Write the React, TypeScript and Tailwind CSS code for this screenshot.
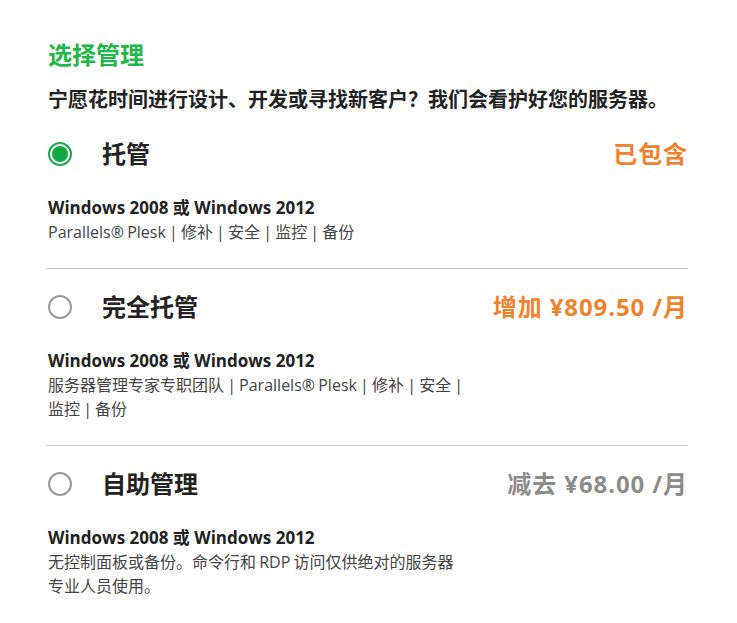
import React, { useState } from "react";

type Plan = {
    id: string;
    name: string;
    price: string;
    priceTone: "orange" | "gray";
    details: string;
};

const plans: Plan[] = [
    {
        id: "managed",
        name: "托管",
        price: "已包含",
        priceTone: "orange",
        details: "Parallels® Plesk\u00a0| 修补\u00a0| 安全\u00a0| 监控\u00a0| 备份",
    },
    {
        id: "full",
        name: "完全托管",
        price: "增加 ¥809.50 /月",
        priceTone: "orange",
        details: "服务器管理专家专职团队\u00a0| Parallels® Plesk\u00a0| 修补\u00a0| 安全\u00a0| 监控\u00a0| 备份",
    },
    {
        id: "self",
        name: "自助管理",
        price: "减去 ¥68.00 /月",
        priceTone: "gray",
        details: "无控制面板或备份。命令行和 RDP 访问仅供绝对的服务器专业人员使用。",
    },
];

const Radio: React.FC<{ checked: boolean }> = ({ checked }) =>
    checked ? (
        <span className="flex h-6 w-6 shrink-0 items-center justify-center rounded-full border-2 border-[#1ea84b] bg-white">
            <span className="h-[16px] w-[16px] rounded-full bg-[#13a643]" />
        </span>
    ) : (
        <span className="h-6 w-6 shrink-0 rounded-full border-2 border-[#9a9a9a] bg-white" />
    );

const App: React.FC = () => {
    const [selected, setSelected] = useState("managed");

    return (
        <div
            className="min-h-[623px] bg-white px-[48px] pt-[40px] text-[#222]"
            style={{ fontFamily: '"Open Sans", "Noto Sans CJK SC", sans-serif' }}
        >
            <h1 className="text-[24px] font-bold leading-[30px] text-[#1fb84a]">选择管理</h1>
            <p className="mt-[16px] text-[20px] font-bold leading-[28px] text-[#222]">
                宁愿花时间进行设计、开发或寻找新客户？我们会看护好您的服务器。
            </p>

            <div className="mt-[20px] w-[640px]">
                {plans.map((plan, i) => (
                    <div
                        key={plan.id}
                        className={
                            i < plans.length - 1
                                ? "border-b border-[#c8c8c8] pb-[24px] mb-[18px] -ml-[2px] pl-[2px]"
                                : "-ml-[2px] pl-[2px]"
                        }
                    >
                        <button
                            type="button"
                            onClick={() => setSelected(plan.id)}
                            className="flex h-[40px] w-full items-center text-left"
                        >
                            <Radio checked={selected === plan.id} />
                            <span className="ml-[30px] text-[24px] font-bold leading-[40px] text-[#222]">
                                {plan.name}
                            </span>
                            <span
                                className={
                                    plan.priceTone === "orange"
                                        ? "ml-auto text-[24px] font-bold leading-[40px] tracking-[0.9px] text-[#f0822e]"
                                        : "ml-auto text-[24px] font-bold leading-[40px] tracking-[0.9px] text-[#8c8c8c]"
                                }
                            >
                                {plan.price}
                            </span>
                        </button>
                        <div className="mt-[22px] text-[17px] font-bold leading-[24px] text-[#222]">
                            Windows 2008 或 Windows 2012
                        </div>
                        <div className="max-w-[420px] text-[16px] leading-[24px] text-[#444] [word-spacing:-1px]">
                            {plan.details}
                        </div>
                    </div>
                ))}
            </div>
        </div>
    );
};

export default App;
